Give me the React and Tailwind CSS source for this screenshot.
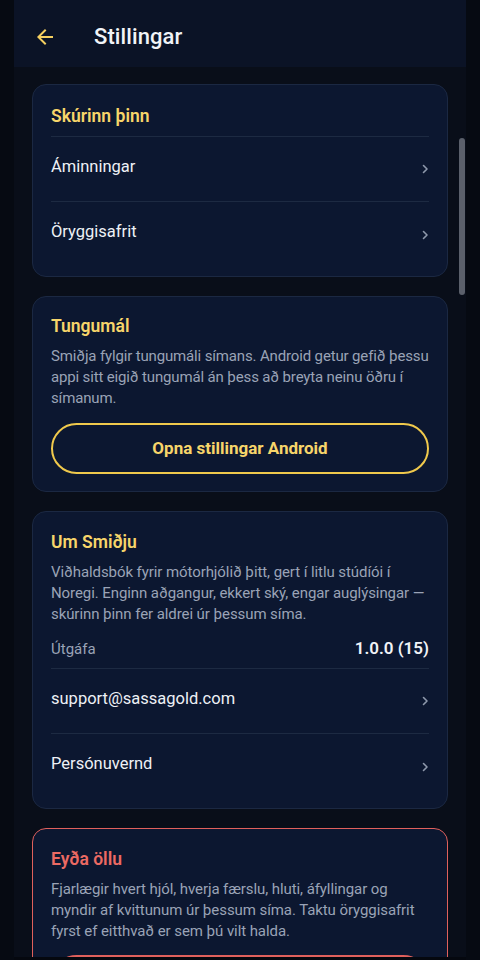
import React from "react";

const font = { fontFamily: "Roboto, 'Noto Sans', sans-serif" };

function Chevron() {
  return (
    <svg width="8" height="12" viewBox="0 0 8 12" className="shrink-0">
      <path d="M2.5 2.5 L6 6 L2.5 9.5" fill="none" stroke="#8e98ab" strokeWidth="1.6" strokeLinecap="round" strokeLinejoin="round" />
    </svg>
  );
}

function Row({ label, last }) {
  return (
    <div className={`flex items-center justify-between h-[65px] ${last ? "" : "border-b border-[#1d2a42]"}`}>
      <span className="text-[16.5px] text-[#eef1f6] -mt-[4px]">{label}</span>
      <Chevron />
    </div>
  );
}

function Card({ children, danger }) {
  return (
    <div
      className={`rounded-[14px] border ${danger ? "border-[#e0605c]" : "border-[#1b2842]"} bg-[#0c1730] px-[18px]`}
    >
      {children}
    </div>
  );
}

export default function App() {
  return (
    <div style={font} className="h-[960px] overflow-hidden bg-[#060a12]">
      <div className="relative mx-[14px] h-[960px] bg-[#090e19] overflow-hidden">
        <header className="h-[67px] bg-[#0b1326] flex items-center">
          <svg width="24" height="24" viewBox="0 0 24 24" className="ml-[19px] mt-[7px]">
            <path d="M20 11H7.83l5.59-5.59L12 4l-8 8 8 8 1.41-1.41L7.83 13H20v-2z" fill="#f5d060" />
          </svg>
          <h1 className="ml-[37px] text-[22px] font-medium text-[#f1f3f7] mt-[6px] tracking-[0.1px]">Stillingar</h1>
        </header>

        <div className="px-[18px] pt-[17px] flex flex-col gap-[19px]">
          <Card>
            <div className="pt-[19px] pb-[8px] border-b border-[#1d2a42]">
              <h2 className="text-[17.5px] font-semibold text-[#f7d56a] leading-[24px]">Skúrinn þinn</h2>
            </div>
            <Row label="Áminningar" />
            <Row label="Öryggisafrit" last />
            <div className="h-[9px]" />
          </Card>

          <Card>
            <div className="pt-[17px] pb-[17px]">
              <h2 className="text-[17.5px] font-semibold text-[#f7d56a] leading-[24px]">Tungumál</h2>
              <p className="mt-[8px] mr-[-4px] text-[15px] leading-[21px] text-[#9aa3b6] tracking-[-0.15px]">
                Smiðja fylgir tungumáli símans. Android getur gefið þessu appi sitt eigið tungumál án þess að breyta neinu öðru í símanum.
              </p>
              <button className="mt-[14px] w-full h-[51px] rounded-full border-2 border-[#f0c94c] text-[17px] font-bold text-[#f7d56a]">
                Opna stillingar Android
              </button>
            </div>
          </Card>

          <Card>
            <div className="pt-[18px]">
              <h2 className="text-[17.5px] font-semibold text-[#f7d56a] leading-[24px]">Um Smiðju</h2>
              <p className="mt-[8px] text-[15px] leading-[21px] text-[#9aa3b6] tracking-[-0.08px]">
                Viðhaldsbók fyrir mótorhjólið þitt, gert í litlu stúdíói í Noregi. Enginn aðgangur, ekkert ský, engar auglýsingar — skúrinn þinn fer aldrei úr þessum síma.
              </p>
              <div className="mt-[12px] flex items-center justify-between h-[32px] border-b border-[#1d2a42] pb-[7px]">
                <span className="text-[15px] text-[#9aa3b6]">Útgáfa</span>
                <span className="text-[17px] font-semibold text-[#f1f3f7]">1.0.0 (15)</span>
              </div>
              <Row label="support@sassagold.com" />
              <Row label="Persónuvernd" last />
              <div className="h-[9px]" />
            </div>
          </Card>

          <Card danger>
            <div className="pt-[18px]">
              <h2 className="text-[17.5px] font-semibold text-[#ec6a63] leading-[24px]">Eyða öllu</h2>
              <p className="mt-[8px] text-[15px] leading-[21px] text-[#9aa3b6] tracking-[-0.08px]">
                Fjarlægir hvert hjól, hverja færslu, hluti, áfyllingar og myndir af kvittunum úr þessum síma. Taktu öryggisafrit fyrst ef eitthvað er sem þú vilt halda.
              </p>
              <button className="mt-[13px] w-full h-[51px] rounded-full border-2 border-[#e0605c] text-[17px] font-bold text-[#ec6a63]">
                Eyða öllu
              </button>
              <div className="h-[18px]" />
            </div>
          </Card>
        </div>

        <div className="absolute right-[1px] top-[138px] w-[6px] h-[157px] rounded-full bg-[#5b606b]" />
        <div className="absolute left-0 right-0 bottom-0 h-[3px] bg-[#05080f]" />
      </div>
    </div>
  );
}
